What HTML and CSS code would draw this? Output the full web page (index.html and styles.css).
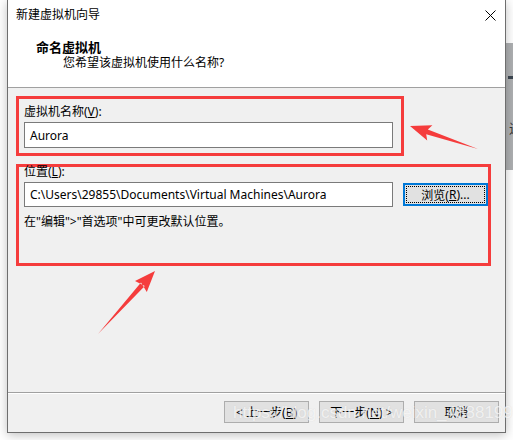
FILE: index.html
```html
<!DOCTYPE html>
<html lang="zh-CN">
<head>
  <meta charset="UTF-8">
  <title>新建虚拟机向导</title>
  <link rel="stylesheet" href="styles.css">
</head>
<body>
  <!-- Window behind the dialog -->
  <div class="back-window">
    <span class="back-mark"></span>
    <span class="back-text">近</span>
  </div>

  <div class="window">
    <!-- Title bar -->
    <div class="titlebar">
      <span class="titlebar-text">新建虚拟机向导</span>
      <svg class="close-icon" width="11" height="11" viewBox="0 0 11 11">
        <path d="M0.5 0.5 L10.5 10.5 M10.5 0.5 L0.5 10.5" stroke="#000" stroke-width="1" fill="none"/>
      </svg>
    </div>

    <!-- Header -->
    <div class="header">
      <div class="header-title">命名虚拟机</div>
      <div class="header-sub">您希望该虚拟机使用什么名称?</div>
    </div>

    <!-- Body -->
    <div class="body">
      <div class="group group-name">
        <div class="label">虚拟机名称(<u>V</u>):</div>
        <div class="input input-name">Aurora</div>
      </div>

      <div class="group group-location">
        <div class="label label-location">位置(<u>L</u>):</div>
        <div class="row">
          <div class="input input-path">C:\Users\29855\Documents\Virtual Machines\Aurora</div>
          <button class="btn btn-browse"><span class="focus">浏览(<u>R</u>)...</span></button>
        </div>
        <div class="note">在"编辑"&gt;"首选项"中可更改默认位置。</div>
      </div>
    </div>

    <!-- Footer -->
    <div class="footer">
      <button class="btn">&lt; 上一步(<u>B</u>)</button>
      <button class="btn">下一步(<u>N</u>) &gt;</button>
      <button class="btn">取消</button>
    </div>

    <!-- Annotation arrows (page coordinates) -->
    <svg class="arrows" width="513" height="440" viewBox="0 0 513 440">
      <polygon fill="#f53c3c" points="478,149 427.8,129.4 432.4,125.2 410,126 427.2,140.4 426.2,134.2"/>
      <polygon fill="#f53c3c" points="98,334 144.8,286 135,281.1 155,271 146.8,291.9 141,282.6"/>
    </svg>

    <div class="watermark">https://blog.csdn.net/weixin_43881997</div>
  </div>
</body>
</html>
```

FILE: styles.css
```css
/* General Reset */
* {
  margin: 0;
  padding: 0;
  box-sizing: border-box;
}

body {
  width: 513px;
  height: 440px;
  overflow: hidden;
  background: #ffffff;
  font-family: "Noto Sans", "Noto Sans CJK SC", sans-serif;
  font-size: 12px;
  color: #000;
  position: relative;
}

u {
  text-decoration: underline;
  text-underline-offset: 1px;
}

/* Window partly hidden behind the dialog */
.back-window {
  position: absolute;
  left: 505px;
  top: 43px;
  width: 8px;
  height: 127px;
  background: #aeb0b2;
  overflow: hidden;
}

.back-mark {
  position: absolute;
  left: 3px;
  top: 33px;
  width: 5px;
  height: 3px;
  background: #3c4650;
}

.back-text {
  position: absolute;
  left: 4px;
  top: 77px;
  font-size: 13px;
  line-height: 16px;
  color: #333;
}

/* Dialog window */
.window {
  position: relative;
  margin-left: 7px;
  width: 499px;
  height: 433px;
  border: 1px solid #6e6e6e;
  border-top: none;
  background: #f0f0f0;
  box-shadow: 0 2px 10px rgba(0, 0, 0, 0.25);
  display: flex;
  flex-direction: column;
}

.titlebar {
  height: 30px;
  background: #fff;
  display: flex;
  align-items: center;
  justify-content: space-between;
  padding: 0 9px 0 8px;
}

.titlebar-text {
  line-height: 16px;
}

.close-icon {
  display: block;
}

.header {
  height: 58px;
  background: #fff;
  border-bottom: 1px solid #a0a0a0;
  padding: 9px 0 0 28px;
}

.header-title {
  font-weight: bold;
  font-size: 13px;
  line-height: 16px;
}

.header-sub {
  line-height: 16px;
  padding-left: 27px;
}

/* Body */
.body {
  flex: 1;
  padding: 8px 0 0 8px;
}

.group {
  border: 3px solid #f53c3c;
  padding-left: 5px;
}

.group-name {
  width: 388px;
  height: 60px;
  padding-top: 5px;
}

.group-location {
  width: 475px;
  height: 102px;
  margin-top: 8px;
}

.label {
  line-height: 16px;
  margin-bottom: 2px;
}

.label-location {
  margin-top: -3px;
}

.input {
  width: 369px;
  background: #fff;
  border: 1px solid #7a7a7a;
  padding-left: 5px;
  display: flex;
  align-items: center;
  white-space: nowrap;
  overflow: hidden;
}

.input-name {
  height: 26px;
}

.input-path {
  height: 25px;
}

.row {
  display: flex;
  align-items: center;
  gap: 10px;
}

.note {
  line-height: 16px;
  margin-top: 7px;
}

/* Buttons */
.btn {
  width: 85px;
  height: 22px;
  background: #e1e1e1;
  border: 1px solid #adadad;
  font-family: inherit;
  font-size: 12px;
  color: #000;
  display: flex;
  align-items: center;
  justify-content: center;
}

.btn-browse {
  height: 23px;
  border: 2px solid #0078d7;
  padding: 1px;
}

.btn-browse .focus {
  width: 100%;
  height: 100%;
  border: 1px dotted #000;
  display: flex;
  align-items: center;
  justify-content: center;
}

/* Footer */
.footer {
  height: 40px;
  border-top: 1px solid #a0a0a0;
  box-shadow: inset 0 1px 0 #fff;
  display: flex;
  justify-content: flex-end;
  gap: 10px;
  padding: 8px 6px 0 0;
}

/* Overlays */
.arrows {
  position: absolute;
  left: -8px;
  top: 0;
  pointer-events: none;
}

.watermark {
  position: absolute;
  left: 225px;
  top: 403px;
  font-family: "Liberation Sans", sans-serif;
  font-size: 17px;
  line-height: 20px;
  color: rgba(255, 255, 255, 0.7);
  text-shadow: 0 0 1px rgba(160, 160, 160, 0.3);
  white-space: nowrap;
  pointer-events: none;
}
```
